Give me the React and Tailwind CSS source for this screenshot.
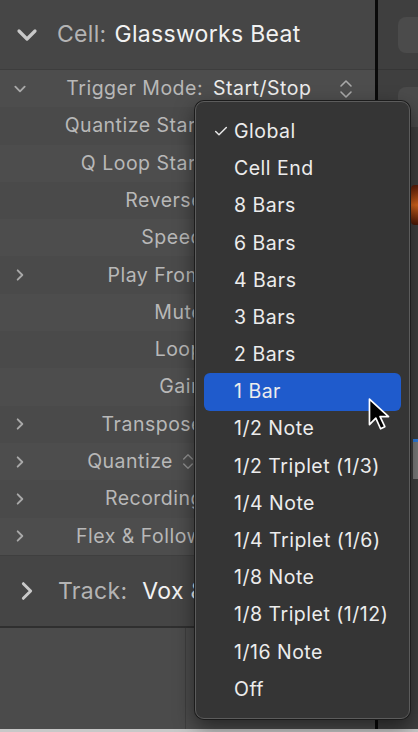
import { Check } from "lucide-react";

const rows = [
  { label: "Trigger Mode:", value: "Start/Stop", open: true, chevron: true, stepper: true },
  { label: "Quantize Start" },
  { label: "Q Loop Start" },
  { label: "Reverse" },
  { label: "Speed" },
  { label: "Play From", chevron: true },
  { label: "Mute" },
  { label: "Loop" },
  { label: "Gain" },
  { label: "Transpose", chevron: true },
  { label: "Quantize", chevron: true, small: true },
  { label: "Recording", chevron: true },
  { label: "Flex & Follow", chevron: true },
];

const options = [
  "Global",
  "Cell End",
  "8 Bars",
  "6 Bars",
  "4 Bars",
  "3 Bars",
  "2 Bars",
  "1 Bar",
  "1/2 Note",
  "1/2 Triplet (1/3)",
  "1/4 Note",
  "1/4 Triplet (1/6)",
  "1/8 Note",
  "1/8 Triplet (1/12)",
  "1/16 Note",
  "Off",
];

const Chevron = ({ down, className }) => (
  <svg viewBox="0 0 12 12" className={className} fill="none" stroke="currentColor" strokeWidth="1.6" strokeLinecap="round" strokeLinejoin="round">
    {down ? <path d="M2 4 L6 8 L10 4" /> : <path d="M4 2 L8 6 L4 10" />}
  </svg>
);

const Stepper = ({ className }) => (
  <svg viewBox="0 0 14 22" className={className} fill="none" stroke="currentColor" strokeWidth="1.6" strokeLinecap="round" strokeLinejoin="round">
    <path d="M2 8 L7 3 L12 8" />
    <path d="M2 14 L7 19 L12 14" />
  </svg>
);

const Cursor = () => (
  <svg viewBox="0 0 24 34" className="absolute left-[366px] top-[397px] w-[26px] h-[36px]">
    <path d="M3 2 L3 26 L9 20 L13.5 30 L17.5 28 L13 18.5 L21 18.5 Z" fill="#000" stroke="#fff" strokeWidth="1.6" strokeLinejoin="round" />
  </svg>
);

const App = () => {
  return (
    <div className="relative w-[418px] h-[732px] overflow-hidden flex bg-[#474747] font-['Inter','Liberation_Sans',sans-serif] antialiased">
      {/* inspector column */}
      <div className="w-[375px] flex flex-col">
        <div className="h-[70px] flex items-center bg-[#464646] border-b border-[#3d3d3d]">
          <Chevron down className="w-[24px] h-[24px] ml-[15px] text-[#c9c9c9]" />
          <span className="ml-[18px] text-[23px] text-[#b4b4b4] tracking-[0.3px]">Cell:</span>
          <span className="ml-[8px] text-[23px] text-[#f2f2f2] tracking-[0.3px]">Glassworks Beat</span>
        </div>

        {rows.map((row, i) => (
          <div
            key={row.label}
            className={`h-[37.3px] flex items-center ${i % 2 === 0 ? "bg-[#4d4d4d]" : "bg-[#4a4a4a]"}`}
          >
            <div className="w-[30px] flex justify-center pl-[10px]">
              {row.chevron && (
                <Chevron down={row.open} className="w-[14px] h-[14px] text-[#a9a9a9]" />
              )}
            </div>
            <div className="w-[173px] flex justify-end items-center">
              <span className="text-[19.5px] tracking-[0.5px] text-[#b8b8b8] whitespace-nowrap">{row.label}</span>
              {row.small && <Stepper className="w-[12px] h-[19px] ml-[9px] mr-[9px] text-[#8f8f8f]" />}
            </div>
            {row.value && (
              <>
                <span className="ml-[10px] text-[19.5px] tracking-[0.5px] text-[#ececec]">{row.value}</span>
                <Stepper className="ml-auto mr-[22px] w-[14px] h-[22px] text-[#a9a9a9]" />
              </>
            )}
          </div>
        ))}

        <div className="h-[73px] flex items-center bg-[#454545] border-t border-[#3f3f3f] border-b-2 border-b-[#2f2f2f]">
          <Chevron className="w-[22px] h-[22px] ml-[16px] text-[#c9c9c9]" />
          <div className="w-[157px] flex items-center overflow-hidden whitespace-nowrap">
            <span className="ml-[20px] text-[23px] tracking-[0.3px] text-[#b4b4b4]">Track:</span>
            <span className="ml-[15px] text-[23px] tracking-[0.3px] text-[#f2f2f2]">Vox &amp; Keys</span>
          </div>
        </div>

        <div className="flex-1 flex bg-[#4b4b4b]">
          <div className="w-[186px] border-r border-[#3e3e3e]" />
          <div className="flex-1" />
        </div>
      </div>

      <div className="w-[3px] bg-[#0a0a0a]" />

      {/* track area strip */}
      <div className="flex-1 flex flex-col bg-[#3f3f3f]">
        <div className="h-[70px] border-b border-[#363636] pt-[17px] pl-[20px]">
          <div className="h-[36px] rounded-l-[8px] bg-[#4b4b4b]" />
        </div>
        <div className="h-[60px] pt-[17px] pl-[20px]">
          <div className="h-[40px] rounded-l-[8px] bg-[#4b4b4b]" />
        </div>
        <div className="h-[55px]" />
        <div className="h-[40px] ml-[33px] rounded-l-[4px] bg-gradient-to-b from-[#5a1a08] via-[#d8641a] to-[#4a1606]" />
        <div className="h-[214px]" />
        <div className="h-[40px] ml-[35px] bg-[#7d7d7d] border-t-[3px] border-t-[#2f7de0]" />
        <div className="flex-1" />
      </div>
      <div className="absolute left-0 right-0 bottom-0 h-[3px] bg-[#c8c8c8]" />

      {/* quantize start popup menu */}
      <div className="absolute left-[195px] top-[101px] w-[215px] h-[618px] rounded-[9px] bg-[#353535] border border-[#5c5c5c] shadow-[0_0_0_1px_#1c1c1c,0_8px_20px_rgba(0,0,0,0.5)] pt-[11px] px-[8px]">
        {options.map((opt, i) => (
          <div
            key={opt}
            className={`h-[37.2px] flex items-center rounded-[6px] ${opt === "1 Bar" ? "bg-[#1f5bcc]" : ""}`}
          >
            <div className="w-[30px] flex justify-end pr-[5px]">
              {i === 0 && <Check className="w-[16px] h-[17px] text-[#e8e8e8]" strokeWidth={2.2} />}
            </div>
            <span className="text-[19.5px] tracking-[0.5px] text-[#ececec] whitespace-nowrap">{opt}</span>
          </div>
        ))}
      </div>

      <Cursor />
    </div>
  );
};

export default App;
